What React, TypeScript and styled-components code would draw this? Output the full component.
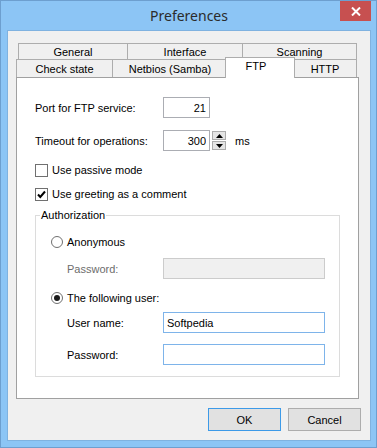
import styled, { createGlobalStyle } from "styled-components";

const GlobalStyle = createGlobalStyle`
  body {
    margin: 0;
    font-family: "Liberation Sans", Arial, sans-serif;
    font-size: 11px;
    color: #000;
  }
`;

const Frame = styled.div`
  width: 377px;
  height: 448px;
  box-sizing: border-box;
  background: #8cc5f5;
  border: 1px solid #6d9fcf;
  padding: 0 5px 6px 6px;
  display: flex;
  flex-direction: column;
`;

const TitleBar = styled.div`
  height: 29px;
  display: grid;
  grid-template-columns: 1fr auto 1fr;
  align-items: start;
`;

const Title = styled.div`
  grid-column: 2;
  font-family: "Noto Sans", sans-serif;
  font-size: 14px;
  line-height: 29px;
  color: #2b2b2b;
`;

const CloseButton = styled.div`
  grid-column: 3;
  justify-self: end;
  width: 31px;
  height: 20px;
  background: #c75050;
  display: flex;
  align-items: center;
  justify-content: center;
`;

const Client = styled.div`
  flex: 1;
  background: #f0f0f0;
  border: 1px solid #7fb2e0;
  padding: 12px 11px 9px 8px;
  display: flex;
  flex-direction: column;
`;

const TabStrip = styled.div`
  display: flex;
  flex-direction: column;
  margin-right: 2px;
`;

const TabRow = styled.div<{ $indent: number; $h: number }>`
  display: flex;
  height: ${(p) => p.$h}px;
  padding-left: ${(p) => p.$indent}px;
`;

const Tab = styled.div<{ $w: number; $last?: boolean }>`
  flex: 0 0 ${(p) => p.$w}px;
  box-sizing: border-box;
  background: #f0f0f0;
  border-top: 1px solid #adadad;
  border-left: 1px solid #adadad;
  border-right: ${(p) => (p.$last ? "1px solid #adadad" : "none")};
  display: flex;
  align-items: center;
  justify-content: center;
  padding-top: 1px;
`;

const ActiveTab = styled.div<{ $w: number }>`
  flex: 0 0 ${(p) => p.$w}px;
  box-sizing: border-box;
  position: relative;
  z-index: 1;
  height: 21px;
  margin: -2px -2px -1px -2px;
  background: #fff;
  border: 1px solid #adadad;
  border-bottom: none;
  display: flex;
  align-items: center;
  justify-content: center;
  padding: 0 8px 5px 0;
`;

const Panel = styled.div`
  flex: 1;
  background: #fff;
  border: 1px solid #a0a0a0;
  padding: 19px 0 0 18px;
`;

const FieldRow = styled.div<{ $top: number }>`
  display: flex;
  align-items: center;
  height: 21px;
  margin-top: ${(p) => p.$top}px;
`;

const Label = styled.span<{ $w: number; $disabled?: boolean }>`
  flex: 0 0 ${(p) => p.$w}px;
  color: ${(p) => (p.$disabled ? "#6d6d6d" : "#000")};
`;

const TextBox = styled.input<{ $w: number; $right?: boolean; $focus?: boolean }>`
  width: ${(p) => p.$w}px;
  height: 21px;
  box-sizing: border-box;
  margin: 0;
  padding: 0 3px;
  border: 1px solid ${(p) => (p.$focus ? "#7eb4ea" : "#abadb3")};
  background: #fff;
  font: 11px "Liberation Sans", Arial, sans-serif;
  color: #000;
  text-align: ${(p) => (p.$right ? "right" : "left")};
  outline: none;

  &:disabled {
    background: #f0f0f0;
    border-color: #cccccc;
  }
`;

const Spinner = styled.div`
  display: flex;
  flex-direction: column;
  gap: 1px;
  margin-left: 2px;
`;

const SpinButton = styled.div`
  width: 14px;
  height: 9px;
  box-sizing: border-box;
  background: #e5e5e5;
  border: 1px solid #acacac;
  display: flex;
  align-items: center;
  justify-content: center;
`;

const Unit = styled.span`
  margin-left: 9px;
`;

const OptionRow = styled.div<{ $top: number }>`
  display: flex;
  align-items: center;
  gap: 4px;
  height: 16px;
  margin-top: ${(p) => p.$top}px;
`;

const CheckBox = styled.div`
  width: 13px;
  height: 13px;
  box-sizing: border-box;
  border: 1px solid #707070;
  background: #fff;
  display: flex;
  align-items: center;
  justify-content: center;
`;

const Radio = styled.div<{ $checked?: boolean }>`
  width: 12px;
  height: 12px;
  box-sizing: border-box;
  border-radius: 50%;
  border: 1px solid #707070;
  background: #fff;
  display: flex;
  align-items: center;
  justify-content: center;

  &::after {
    content: "";
    display: ${(p) => (p.$checked ? "block" : "none")};
    width: 6px;
    height: 6px;
    border-radius: 50%;
    background: #1a1a1a;
  }
`;

const Group = styled.fieldset`
  width: 305px;
  box-sizing: border-box;
  margin: 6px 0 0 0;
  padding: 0 0 11px 15px;
  border: 1px solid #dcdcdc;
`;

const Legend = styled.legend`
  margin-left: -11px;
  padding: 0 1px;
  line-height: 14px;
`;

const Indented = styled.div`
  padding-left: 16px;
`;

const ButtonRow = styled.div`
  display: flex;
  justify-content: flex-end;
  gap: 7px;
  margin: 9px -2px 0 0;
`;

const Button = styled.button<{ $default?: boolean }>`
  width: 73px;
  height: 23px;
  padding: 0;
  background: #e1e1e1;
  border: 1px solid ${(p) => (p.$default ? "#3c9ae8" : "#adadad")};
  font: 11px "Liberation Sans", Arial, sans-serif;
  color: #000;
`;

export default function App() {
  return (
    <>
      <GlobalStyle />
      <Frame>
        <TitleBar>
          <Title>Preferences</Title>
          <CloseButton>
            <svg width="10" height="9" viewBox="0 0 10 9">
              <path d="M1 0.5 L9 8.5 M9 0.5 L1 8.5" stroke="#fff" strokeWidth="2" />
            </svg>
          </CloseButton>
        </TitleBar>
        <Client>
          <TabStrip>
            <TabRow $indent={2} $h={16}>
              <Tab $w={109}>General</Tab>
              <Tab $w={115}>Interface</Tab>
              <Tab $w={115} $last>Scanning</Tab>
            </TabRow>
            <TabRow $indent={0} $h={18}>
              <Tab $w={96}>Check state</Tab>
              <Tab $w={115}>Netbios (Samba)</Tab>
              <ActiveTab $w={70}>FTP</ActiveTab>
              <Tab $w={64} $last>HTTP</Tab>
            </TabRow>
          </TabStrip>
          <Panel>
            <FieldRow $top={0}>
              <Label $w={128}>Port for FTP service:</Label>
              <TextBox $w={47} $right readOnly value="21" />
            </FieldRow>
            <FieldRow $top={12}>
              <Label $w={128}>Timeout for operations:</Label>
              <TextBox $w={47} $right readOnly value="300" />
              <Spinner>
                <SpinButton>
                  <svg width="7" height="4" viewBox="0 0 7 4">
                    <path d="M0 4 L3.5 0 L7 4 Z" fill="#000" />
                  </svg>
                </SpinButton>
                <SpinButton>
                  <svg width="7" height="4" viewBox="0 0 7 4">
                    <path d="M0 0 L3.5 4 L7 0 Z" fill="#000" />
                  </svg>
                </SpinButton>
              </Spinner>
              <Unit>ms</Unit>
            </FieldRow>
            <OptionRow $top={11}>
              <CheckBox />
              <span>Use passive mode</span>
            </OptionRow>
            <OptionRow $top={8}>
              <CheckBox>
                <svg width="11" height="11" viewBox="0 0 11 11">
                  <path d="M2 5.5 L4.3 8 L9 2.5" stroke="#000" strokeWidth="2" fill="none" />
                </svg>
              </CheckBox>
              <span>Use greeting as a comment</span>
            </OptionRow>
            <Group>
              <Legend>Authorization</Legend>
              <OptionRow $top={12}>
                <Radio />
                <span>Anonymous</span>
              </OptionRow>
              <Indented>
                <FieldRow $top={8}>
                  <Label $w={96} $disabled>Password:</Label>
                  <TextBox $w={162} disabled value="" readOnly />
                </FieldRow>
              </Indented>
              <OptionRow $top={11}>
                <Radio $checked />
                <span>The following user:</span>
              </OptionRow>
              <Indented>
                <FieldRow $top={6}>
                  <Label $w={96}>User name:</Label>
                  <TextBox $w={162} $focus readOnly value="Softpedia" />
                </FieldRow>
                <FieldRow $top={11}>
                  <Label $w={96}>Password:</Label>
                  <TextBox $w={162} $focus readOnly value="" />
                </FieldRow>
              </Indented>
            </Group>
          </Panel>
          <ButtonRow>
            <Button $default>OK</Button>
            <Button>Cancel</Button>
          </ButtonRow>
        </Client>
      </Frame>
    </>
  );
}
